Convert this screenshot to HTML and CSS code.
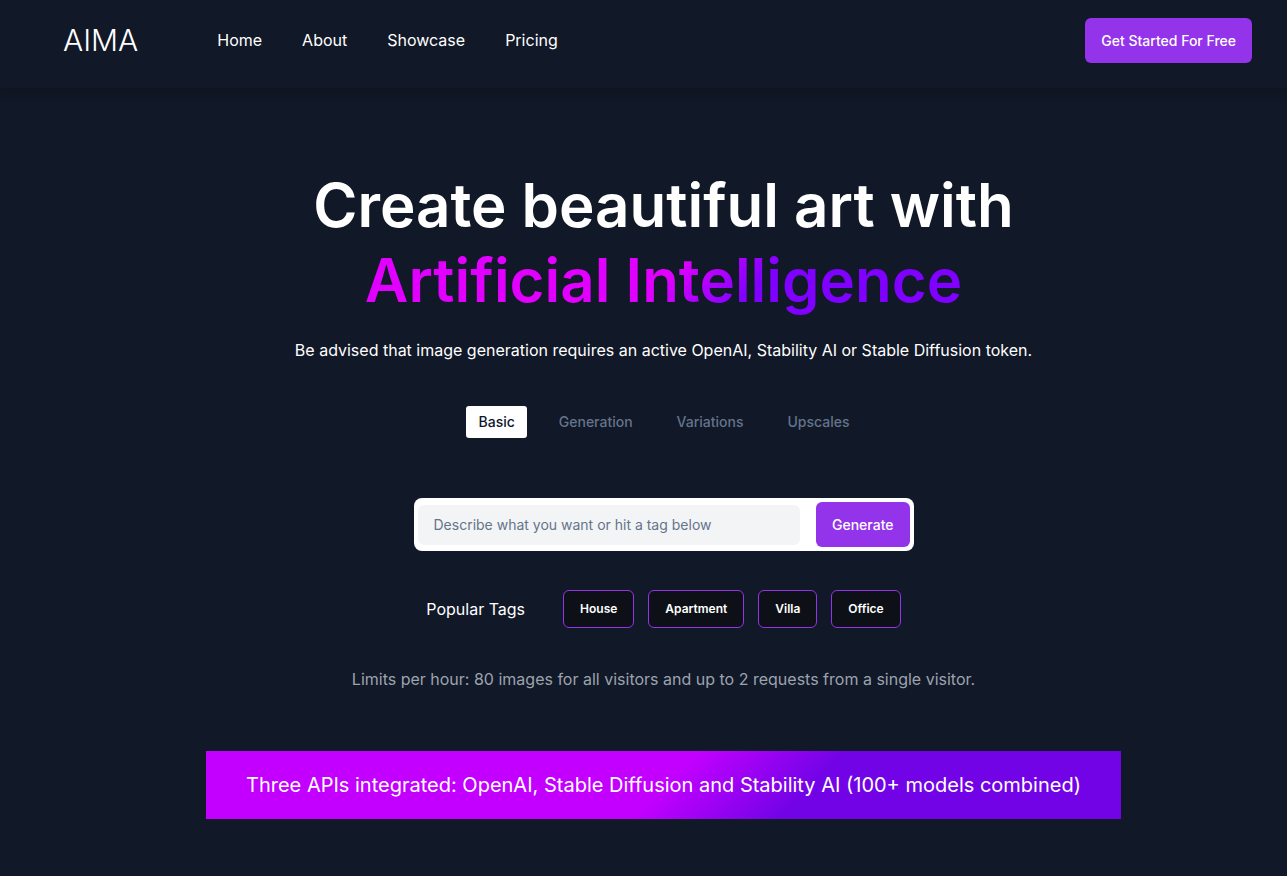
FILE: index.html
```
<!DOCTYPE html>
<html lang="en">
<head>
<meta charset="utf-8">
<meta name="viewport" content="width=device-width, initial-scale=1">
<title>AIMA</title>
<link rel="stylesheet" href="styles.css">
</head>
<body>
<header class="header">
  <a class="logo" href="#">AIMA</a>
  <nav class="nav" aria-label="Main">
    <a href="#">Home</a>
    <a href="#">About</a>
    <a href="#">Showcase</a>
    <a href="#">Pricing</a>
  </nav>
  <button class="button" type="button">Get Started For Free</button>
</header>
<main class="hero">
  <h1 class="title">Create beautiful art with<br><span class="title-accent">Artificial Intelligence</span></h1>
  <p class="notice">Be advised that image generation requires an active OpenAI, Stability AI or Stable Diffusion token.</p>
  <div class="tabs" role="tablist">
    <button class="tab tab-active" type="button" role="tab" aria-selected="true">Basic</button>
    <button class="tab" type="button" role="tab" aria-selected="false">Generation</button>
    <button class="tab" type="button" role="tab" aria-selected="false">Variations</button>
    <button class="tab" type="button" role="tab" aria-selected="false">Upscales</button>
  </div>
  <form class="prompt">
    <input class="prompt-input" type="text" aria-label="Image description" placeholder="Describe what you want or hit a tag below">
    <button class="button" type="button">Generate</button>
  </form>
  <div class="tags">
    <span class="tags-label">Popular Tags</span>
    <button class="tag" type="button">House</button>
    <button class="tag" type="button">Apartment</button>
    <button class="tag" type="button">Villa</button>
    <button class="tag" type="button">Office</button>
  </div>
  <p class="limits">Limits per hour: 80 images for all visitors and up to 2 requests from a single visitor.</p>
  <p class="banner">Three APIs integrated: OpenAI, Stable Diffusion and Stability AI (100+ models combined)</p>
</main>
</body>
</html>
```
FILE: styles.css
```
*, *::before, *::after { box-sizing: border-box; }
body {
  margin: 0;
  background: #111827;
  color: #fff;
  font-family: Inter, "Liberation Sans", sans-serif;
  font-size: 16px;
  line-height: 24px;
}
h1, p { margin: 0; }
button, input { font: inherit; }
a { color: inherit; text-decoration: none; }

.header {
  display: flex;
  align-items: center;
  padding: 18px 35px 25px 63px;
  box-shadow: 0 4px 8px 4px rgba(0, 0, 0, 0.1);
}
.logo, .nav { padding-bottom: 2px; }
.logo { font-size: 30px; line-height: 36px; font-weight: 300; }
.nav { display: flex; gap: 40px; margin: 0 auto 0 79px; }
.button {
  height: 45px;
  padding: 0 16px;
  border: 0;
  border-radius: 6px;
  background: #9333ea;
  color: #fff;
  font-size: 14px;
  font-weight: 500;
}

.hero {
  display: flex;
  flex-direction: column;
  align-items: center;
  padding: 80px 0 56px 40px;
  text-align: center;
}
.title { font-size: 60px; line-height: 75px; font-weight: 600; }
.title-accent {
  background: linear-gradient(135deg, #e100ff 50%, #7f00ff 65%);
  -webkit-background-clip: text;
  background-clip: text;
  color: transparent;
}
.notice { margin-top: 20px; }

.tabs { display: flex; gap: 20px; margin-top: 44px; padding-left: 1px; }
.tab {
  height: 32px;
  padding: 0 12px;
  border: 0;
  border-radius: 3px;
  background: transparent;
  color: #64748b;
  font-size: 14px;
  font-weight: 500;
}
.tab-active { background: #fff; color: #0f172a; }

.prompt {
  display: flex;
  align-items: center;
  gap: 16px;
  width: 100%;
  max-width: 500px;
  margin-top: 60px;
  padding: 4px;
  border-radius: 8px;
  background: #fff;
}
.prompt-input {
  flex: 1;
  min-width: 0;
  height: 40px;
  padding: 0 16px;
  border: 0;
  border-radius: 6px;
  background: #f3f4f6;
  color: #0f172a;
  font-size: 14px;
}
.prompt-input::placeholder { color: #64748b; opacity: 1; }

.tags { display: flex; align-items: center; gap: 14px; margin-top: 39px; }
.tags-label { margin-right: 24px; }
.tag {
  height: 38px;
  padding: 0 16px;
  border: 1px solid #9333ea;
  border-radius: 6px;
  background: #0d1117;
  color: #fff;
  font-size: 12px;
  font-weight: 600;
}
.limits { margin-top: 39px; color: #9ca3af; }
.banner {
  margin-top: 60px;
  padding: 20px 40px;
  background: linear-gradient(135deg, #c300ff 50%, #7303e7 65%);
  font-size: 20px;
  line-height: 28px;
}
```
